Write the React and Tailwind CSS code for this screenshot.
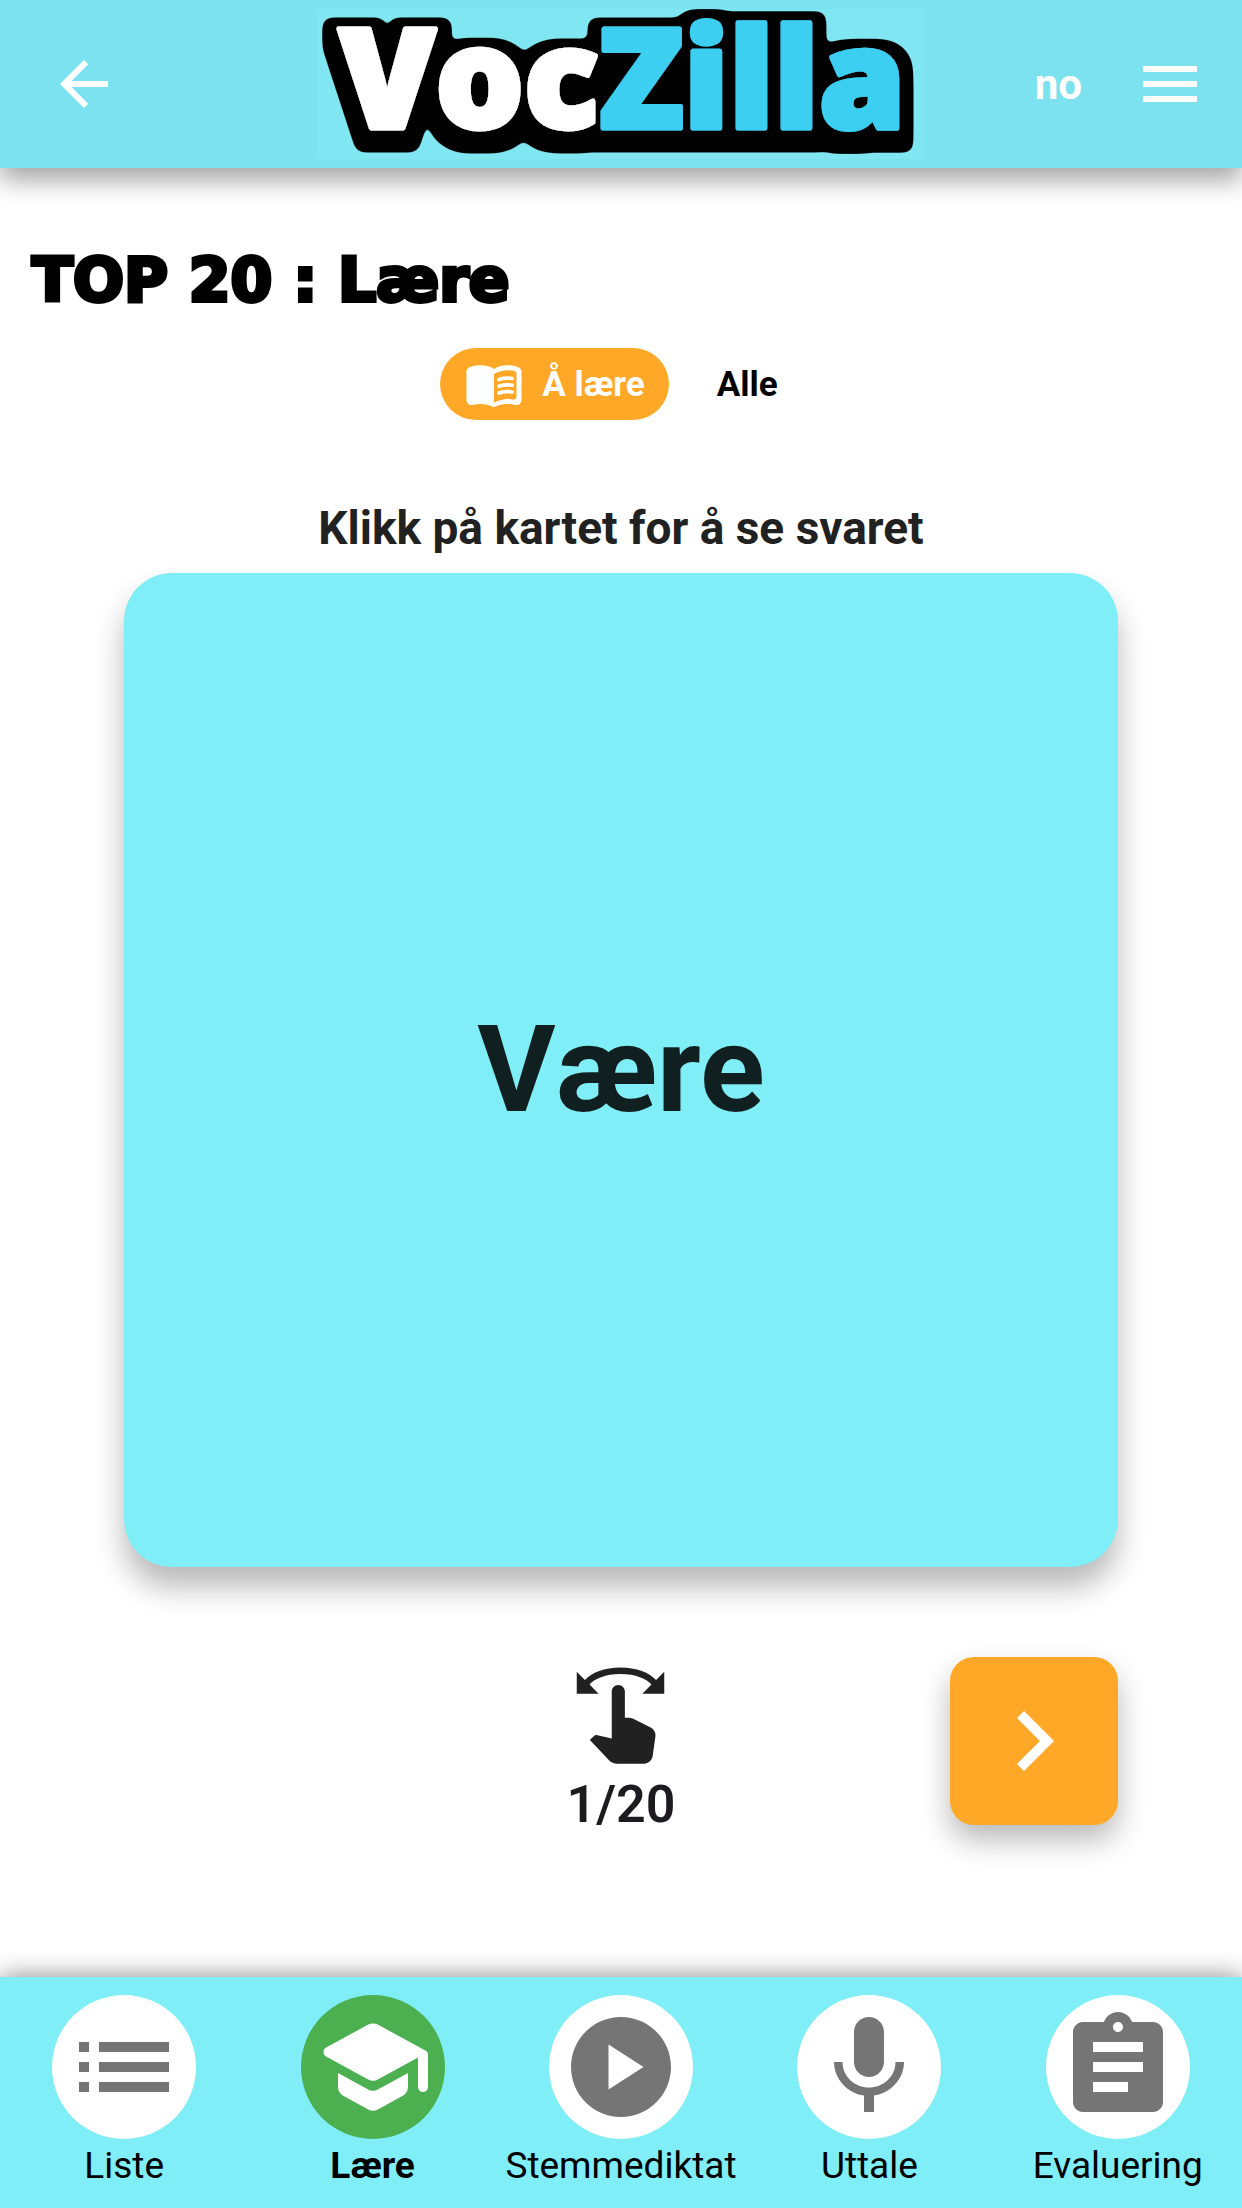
import { MdArrowBack, MdMenu, MdChevronRight, MdSwipe, MdList, MdPlayCircle, MdAssignment } from "react-icons/md";

function SchoolIcon({ className }) {
  return (
    <svg viewBox="0 0 24 24" fill="currentColor" className={className} aria-hidden="true">
      <path d="M5 13.18v2.81c0 .73.4 1.41 1.04 1.76l5 2.73c.6.33 1.32.33 1.92 0l5-2.73c.64-.35 1.04-1.03 1.04-1.76v-2.81l-6.04 3.3c-.6.33-1.32.33-1.92 0L5 13.18zm6.04-9.66l-8.43 4.6c-.69.38-.69 1.38 0 1.76l8.43 4.6c.6.33 1.32.33 1.92 0L21 10.09V16c0 .55.45 1 1 1s1-.45 1-1V9.59c0-.37-.2-.7-.52-.88l-9.52-5.19c-.6-.32-1.32-.32-1.92 0z" />
    </svg>
  );
}

function MicIcon({ className }) {
  return (
    <svg viewBox="0 0 24 24" fill="currentColor" className={className} aria-hidden="true">
      <path d="M12 14c1.66 0 2.99-1.34 2.99-3L15 5c0-1.66-1.34-3-3-3S9 3.34 9 5v6c0 1.66 1.34 3 3 3zm5.3-3c0 3-2.54 5.1-5.3 5.1S6.7 14 6.7 11H5c0 3.41 2.72 6.23 6 6.72V21h2v-3.28c3.28-.48 6-3.3 6-6.72h-1.7z" />
    </svg>
  );
}

function BookIcon({ className }) {
  return (
    <svg viewBox="0 0 24 24" fill="none" className={className} aria-hidden="true">
      <path fill="currentColor" fillRule="evenodd" d="M17.5 4.5c-1.95 0-4.05.4-5.5 1.5-1.45-1.1-3.55-1.5-5.5-1.5-1.45 0-2.99.22-4.28.79C1.49 5.62 1 6.33 1 7.14v11.28c0 1.3 1.22 2.26 2.48 1.94.98-.25 2.02-.36 3.02-.36 1.56 0 3.22.26 4.56.92.6.3 1.28.3 1.87 0 1.34-.67 3-.92 4.56-.92 1 0 2.04.11 3.02.36 1.26.33 2.48-.63 2.48-1.94V7.14c0-.81-.49-1.52-1.22-1.85-1.28-.57-2.82-.79-4.27-.79zM21 17.23c0 .63-.58 1.09-1.2.98-.75-.14-1.53-.2-2.3-.2-1.7 0-4.15.65-5.5 1.5V8c1.35-.85 3.8-1.5 5.5-1.5.92 0 1.83.09 2.7.28.46.1.8.51.8.98v9.47z" />
      <path stroke="currentColor" strokeWidth="1.5" strokeLinecap="round" d="M14 10.2c1.6-.5 3.5-.7 5.2-.4M14 12.9c1.6-.5 3.5-.7 5.2-.4M14 15.6c1.6-.5 3.5-.7 5.2-.4" />
    </svg>
  );
}

function Logo() {
  return (
    <svg viewBox="0 0 608 150" className="h-[150px] w-[608px] bg-[#7fe6f2]" role="img" aria-label="VocZilla">
      <defs>
        <filter id="logo-outline" filterUnits="userSpaceOnUse" x="0" y="0" width="608" height="150">
          <feMorphology in="SourceAlpha" operator="dilate" radius="11 6" result="wide" />
          <feOffset in="wide" dy="6" result="mid" />
          <feOffset in="wide" dy="13" result="low" />
          <feMerge result="stack">
            <feMergeNode in="wide" />
            <feMergeNode in="mid" />
            <feMergeNode in="low" />
          </feMerge>
          <feGaussianBlur in="stack" stdDeviation="4" />
          <feColorMatrix values="0 0 0 0 0  0 0 0 0 0  0 0 0 0 0  0 0 0 12 -2.5" result="outline" />
          <feMerge>
            <feMergeNode in="outline" />
            <feMergeNode in="SourceGraphic" />
          </feMerge>
        </filter>
      </defs>
      <text
        x="22"
        y="119"
        fontFamily='"Open Sans", "Noto Sans", sans-serif'
        fontWeight="800"
        fontSize="139"
        strokeWidth="5"
        strokeLinejoin="round"
        filter="url(#logo-outline)"
      >
        <tspan fill="#fff" stroke="#fff">Voc</tspan>
        <tspan fill="#3dcff2" stroke="#3dcff2">Zilla</tspan>
      </text>
    </svg>
  );
}

const tabs = [
  { label: "Liste", Icon: MdList },
  { label: "Lære", Icon: SchoolIcon, active: true },
  { label: "Stemmediktat", Icon: MdPlayCircle },
  { label: "Uttale", Icon: MicIcon },
  { label: "Evaluering", Icon: MdAssignment },
];

export default function App() {
  return (
    <div className="flex min-h-screen flex-col bg-white font-['Roboto',sans-serif] text-[#212121]">
      <header className="grid h-[168px] grid-cols-[1fr_auto_1fr] items-center bg-[#7de2f0] px-12 text-white shadow-[0_12px_24px_0_rgba(0,0,0,0.36)]">
        <button type="button" aria-label="Tilbake" className="justify-self-start">
          <MdArrowBack className="size-[72px]" />
        </button>
        <Logo />
        <div className="-mr-3 flex items-center justify-end gap-[52px]">
          <button type="button" className="pt-0.5 text-[42px] leading-none font-bold">no</button>
          <button type="button" aria-label="Meny">
            <MdMenu className="size-[72px]" />
          </button>
        </div>
      </header>

      <main className="flex flex-1 flex-col">
        <h1 className="mt-[72px] px-8 font-['DejaVu_Sans',sans-serif] text-[60px] leading-[80px] font-bold text-black [-webkit-text-stroke:4px_black]">
          TOP 20 : Lære
        </h1>

        <div className="mt-7 flex items-center justify-center gap-6 text-[35px] font-bold text-black">
          <button type="button" className="flex h-[72px] items-center gap-[18px] rounded-full bg-[#ffa827] px-6 text-white">
            <BookIcon className="size-[60px]" />
            <span className="pt-0.5">Å lære</span>
          </button>
          <button type="button" className="h-[72px] px-6 pt-0.5">Alle</button>
        </div>

        <p className="mt-20 text-center text-[46px] leading-[56px] font-bold">Klikk på kartet for å se svaret</p>

        <button
          type="button"
          className="mx-auto mt-[17px] flex aspect-square w-4/5 items-center justify-center rounded-[48px] bg-[#80eef6] text-[120px] font-bold text-[#102020] shadow-[0_20px_30px_0_rgba(0,0,0,0.28)]"
        >
          Være
        </button>

        <div className="mx-auto mt-[90px] grid w-4/5 grid-cols-3 items-start">
          <div className="col-start-2 mt-[6px] flex flex-col items-center">
            <MdSwipe className="size-[105px]" />
            <span className="mt-1 text-[52px] leading-[66px] font-semibold text-[#1d1b20]">1/20</span>
          </div>
          <button
            type="button"
            aria-label="Neste"
            className="flex size-[168px] items-center justify-center justify-self-end rounded-3xl bg-[#ffa827] text-white shadow-[0_15px_30px_0_rgba(0,0,0,0.28)]"
          >
            <MdChevronRight className="size-[120px]" />
          </button>
        </div>
      </main>

      <nav className="grid h-[231px] grid-cols-5 bg-[#80eef6] pt-[18px] text-[37px] text-black shadow-[0_0_24px_0_rgba(0,0,0,0.48)]">
        {tabs.map(({ label, Icon, active }) => (
          <a
            key={label}
            href="#"
            aria-current={active ? "page" : undefined}
            className={active ? "flex min-w-0 flex-col items-center font-bold" : "flex min-w-0 flex-col items-center"}
          >
            <span className={active ? "flex size-36 items-center justify-center rounded-full bg-[#4caf50] text-white" : "flex size-36 items-center justify-center rounded-full bg-white text-[#757575]"}>
              <Icon className="size-[120px]" />
            </span>
            <span className="leading-[54px]">{label}</span>
          </a>
        ))}
      </nav>
    </div>
  );
}
